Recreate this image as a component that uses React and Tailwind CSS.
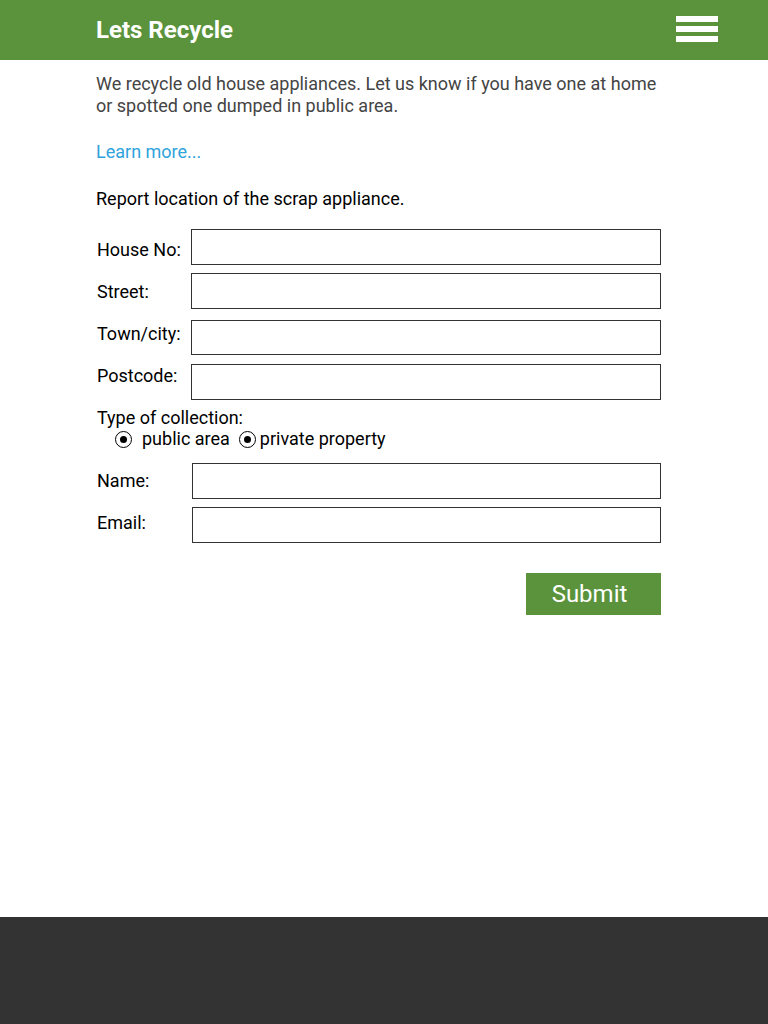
const Field = ({ label, className = "", labelClass = "mt-[7px]", inputClass = "ml-[94px] h-[36px]" }) => (
  <div className={`flex items-start ${className}`}>
    <span className={`w-0 whitespace-nowrap text-[18px] leading-[22px] text-black ${labelClass}`}>{label}</span>
    <div className={`flex-1 border border-[#333] ${inputClass}`} />
  </div>
);

const Radio = () => (
  <span className="inline-flex h-[17px] w-[17px] items-center justify-center rounded-full border border-black">
    <span className="h-[7px] w-[7px] rounded-full bg-black" />
  </span>
);

export default function App() {
  return (
    <div className="flex min-h-[1024px] flex-col bg-white font-['Roboto',sans-serif]">
      <header className="flex h-[60px] items-center justify-between bg-[#5a933b] pl-[96px] pr-[50px]">
        <h1 className="text-[24px] font-bold text-white">Lets Recycle</h1>
        <div className="mb-[2px] flex flex-col gap-[4px]">
          <div className="h-[6px] w-[42px] bg-white" />
          <div className="h-[6px] w-[42px] bg-white" />
          <div className="h-[6px] w-[42px] bg-white" />
        </div>
      </header>

      <main className="flex-1 pl-[96px] pr-[107px]">
        <p className="mt-[13px] text-[18px] leading-[22px] text-[#444]">
          We recycle old house appliances. Let us know if you have one at home or spotted one dumped in public area.
        </p>
        <a className="mt-[24px] block text-[18px] leading-[22px] text-[#2ea3dc]">Learn more...</a>
        <p className="mt-[25px] text-[18px] leading-[22px] text-black">Report location of the scrap appliance.</p>

        <div className="mt-[19px] pl-[1px]">
          <Field label="House No:" labelClass="mt-[10px]" />
          <Field label="Street:" className="mt-[8px]" labelClass="mt-[8px]" />
          <Field label="Town/city:" className="mt-[11px]" labelClass="mt-[3px]" inputClass="ml-[94px] h-[35px]" />
          <Field label="Postcode:" className="mt-[9px]" labelClass="mt-[1px]" />

          <div className="mt-[7px] text-[18px] leading-[22px] text-black">Type of collection:</div>
          <div className="mt-[-1px] flex items-center pl-[18px] text-[18px] leading-[22px] text-black">
            <Radio />
            <span className="ml-[10px]">public area</span>
            <span className="ml-[9px] flex"><Radio /></span>
            <span className="ml-[4px]">private property</span>
          </div>

          <Field label="Name:" className="mt-[13px]" inputClass="ml-[95px] h-[36px]" />
          <Field label="Email:" className="mt-[8px]" labelClass="mt-[5px]" inputClass="ml-[95px] h-[36px]" />

          <div className="mt-[30px] flex justify-end">
            <button className="h-[42px] w-[135px] bg-[#5a933b] pr-[8px] text-[24px] text-white">Submit</button>
          </div>
        </div>
      </main>

      <footer className="h-[107px] bg-[#333333]" />
    </div>
  );
}
